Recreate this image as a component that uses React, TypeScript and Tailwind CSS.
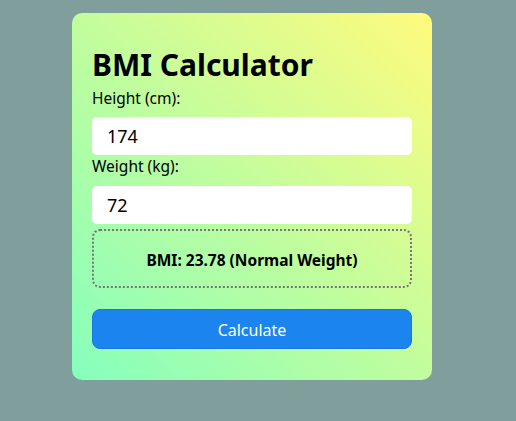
import { useState } from "react";

function category(bmi: number) {
  if (bmi < 18.5) return "Underweight";
  if (bmi < 25) return "Normal Weight";
  if (bmi < 30) return "Overweight";
  return "Obese";
}

export default function App() {
  const [height, setHeight] = useState("174");
  const [weight, setWeight] = useState("72");
  const [result, setResult] = useState("BMI: 23.78 (Normal Weight)");

  const calculate = () => {
    const h = parseFloat(height) / 100;
    const w = parseFloat(weight);
    if (!h || !w) {
      setResult("Please enter valid values");
      return;
    }
    const bmi = w / (h * h);
    setResult(`BMI: ${bmi.toFixed(2)} (${category(bmi)})`);
  };

  return (
    <div className="min-h-screen bg-[#809e9b] pl-[72px] pt-[13px] font-['Noto_Sans',sans-serif]">
      <div className="w-[360px] rounded-[10px] bg-[linear-gradient(45deg,#85ffbd_0%,#fffb7d_100%)] px-5 pb-[31px] pt-[33px]">
        <h1 className="text-[30px] font-bold leading-[38px] text-black">BMI Calculator</h1>

        <label className="mt-1 block text-[15.5px] leading-5 text-black">Height (cm):</label>
        <input
          type="text"
          value={height}
          onChange={(e) => setHeight(e.target.value)}
          className="mt-[9px] block h-[38px] w-full rounded-[5px] bg-white px-[15px] text-[18px] text-black outline-none"
        />

        <label className="mt-px block text-[15.5px] leading-5 text-black">Weight (kg):</label>
        <input
          type="text"
          value={weight}
          onChange={(e) => setWeight(e.target.value)}
          className="mt-[10px] block h-[38px] w-full rounded-[5px] bg-white px-[15px] text-[18px] text-black outline-none"
        />

        <div className="mt-[5px] flex h-[59px] items-center justify-center rounded-lg border-2 border-dotted border-[#777] pt-1">
          <span className="text-[15.5px] font-bold text-black">{result}</span>
        </div>

        <button
          type="button"
          onClick={calculate}
          className="mt-[21px] block h-10 w-full rounded-lg border border-[#1a76dc] bg-[#1b84ee] pt-px text-base text-white"
        >
          Calculate
        </button>
      </div>
    </div>
  );
}
